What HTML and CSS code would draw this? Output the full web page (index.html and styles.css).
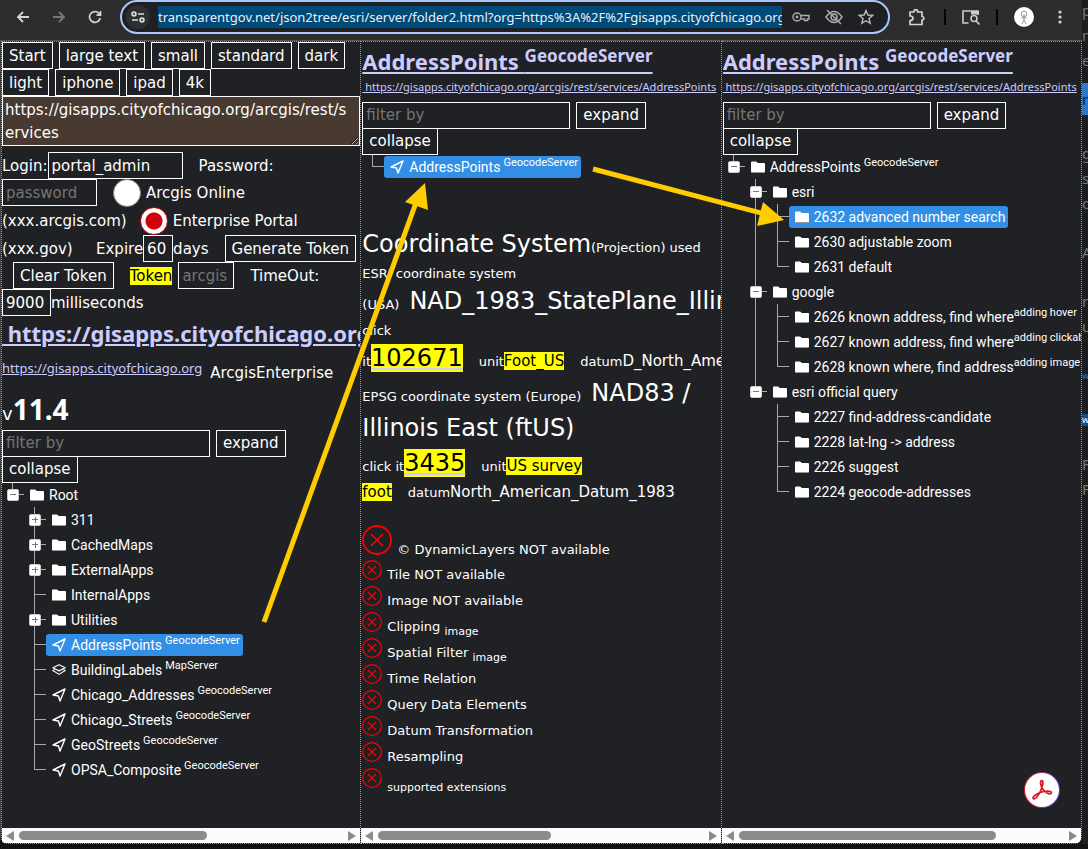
FILE: index.html
```html
<!DOCTYPE html>
<html lang="en">
<head>
<meta charset="utf-8">
<title>AddressPoints GeocodeServer</title>
<link rel="stylesheet" href="styles.css">
</head>
<body>
<svg class="defs" aria-hidden="true">
  <symbol id="folder" viewBox="0 0 14 12"><path d="M0 1.5Q0 .5 1 .5H4.8Q5.4.5 5.8 1L6.8 2H13Q14 2 14 3V10.500Q14 11.500 13 11.500H1Q0 11.500 0 10.500Z" fill="#fff"/><path d="M.5 11.500H13.500" stroke="#999" fill="none"/></symbol>
  <symbol id="nav" viewBox="0 0 14 14"><path d="M13 1 1 7 6.500 8 8 13Z" fill="none" stroke="#fff" stroke-width="1.400" stroke-linejoin="round"/></symbol>
  <symbol id="layers" viewBox="0 0 16 14"><path d="M8 1 15 4.500 8 8 1 4.500ZM3.500 6 1 7.500 8 12 15 7.500 12.500 6" fill="none" stroke="#fff" stroke-width="1.300" stroke-linejoin="round"/></symbol>
  <symbol id="no" viewBox="0 0 30 30"><circle cx="15" cy="15" r="14" fill="none" stroke="#f00" stroke-width="1.800"/><path d="M9 9 21 21M21 9 9 21" stroke="#f00" stroke-width="1.600"/></symbol>
</svg>
<div class="desktop">
<div class="window">
  <header class="toolbar">
    <button class="tb back" aria-label="Back"><svg width="14" height="14" viewBox="0 0 14 14"><path d="M13 7H2M7 2 2 7 7 12" fill="none" stroke="#d5d5d5" stroke-width="1.800"/></svg></button>
    <button class="tb fwd" aria-label="Forward"><svg width="14" height="14" viewBox="0 0 14 14"><path d="M1 7H12M7 2 12 7 7 12" fill="none" stroke="#777" stroke-width="1.800"/></svg></button>
    <button class="tb reload" aria-label="Reload"><svg width="14" height="14" viewBox="0 0 14 14"><path d="M12.200 8A5.400 5.400 0 1 1 11 3.400L12.500 5M12.500 1V5.200H8.500" fill="none" stroke="#d5d5d5" stroke-width="1.700"/></svg></button>
    <div class="address">
      <button class="tb site" aria-label="Site settings"><svg width="14" height="12" viewBox="0 0 14 12"><g fill="none" stroke="#ddd" stroke-width="1.700"><circle cx="3" cy="3" r="1.900"/><circle cx="11" cy="9" r="1.900"/><path d="M7 3H13M1 9H7"/></g></svg></button>
      <input class="url" aria-label="Address" value="transparentgov.net/json2tree/esri/server/folder2.html?org=https%3A%2F%2Fgisapps.cityofchicago.org">
      <button class="tb" aria-label="Passwords"><svg width="18" height="12" viewBox="0 0 18 12"><g fill="none" stroke="#aaa" stroke-width="1.500"><circle cx="5" cy="6" r="4"/><path d="M9 4.500H17V8H15.500V9.500H12.500V8H8.800"/></g><circle cx="5" cy="6" r="1.400" fill="#aaa"/></svg></button>
      <button class="tb" aria-label="Third-party cookies blocked"><svg width="18" height="16" viewBox="0 0 18 16"><g fill="none" stroke="#aaa" stroke-width="1.500"><path d="M1 8Q9-3 17 8Q9 19 1 8Z"/><circle cx="9" cy="8" r="3"/><path d="M2 1 16 15"/></g></svg></button>
      <button class="tb" aria-label="Bookmark"><svg width="16" height="16" viewBox="0 0 16 16"><path d="M8 1.500 9.900 6 14.800 6.400 11 9.500 12.200 14.300 8 11.700 3.800 14.300 5 9.500 1.200 6.400 6.100 6Z" fill="none" stroke="#bbb" stroke-width="1.400"/></svg></button>
    </div>
    <button class="tb ext" aria-label="Extensions"><svg width="18" height="17" viewBox="0 0 18 17"><path d="M2 3H6V2.500A1.800 1.800 0 0 1 9.600 2.500V3H14V7.500H14.500A1.800 1.800 0 0 1 14.500 11H14V15.500H2V11.500Q5 11.500 5 9.300 5 7 2 7Z" fill="none" stroke="#d5d5d5" stroke-width="1.700" stroke-linejoin="round"/></svg></button>
    <span class="sep"></span>
    <button class="tb" aria-label="Search tabs"><svg width="18" height="16" viewBox="0 0 18 16"><g fill="none" stroke="#ccc" stroke-width="1.600"><path d="M6.500 14H1V2H16V6"/><circle cx="12" cy="9.500" r="3"/><path d="M14 12 17.500 15.500"/></g><path d="M9 2H17V5.500H9Z" fill="#ccc"/></svg></button>
    <span class="sep"></span>
    <button class="tb avatar" aria-label="Profile"><svg width="20" height="20" viewBox="0 0 20 20"><circle cx="10" cy="10" r="10" fill="#fff"/><g fill="none" stroke="#888" stroke-width=".9"><circle cx="10" cy="7" r="2.800"/><path d="M10 7V13M7.500 11H12.500M10 13 8 17M10 13 12 17"/></g></svg></button>
    <button class="tb menu" aria-label="Menu"><svg width="4" height="16" viewBox="0 0 4 16" fill="#d5d5d5"><circle cx="2" cy="3" r="1.600"/><circle cx="2" cy="8" r="1.600"/><circle cx="2" cy="13" r="1.600"/></svg></button>
  </header>

  <main class="panels">
    <section class="panel">
      <div class="content">
        <div class="row"><button class="btn">Start</button><button class="btn">large text</button><button class="btn">small</button><button class="btn">standard</button><button class="btn">dark</button></div>
        <div class="row"><button class="btn">light</button><button class="btn">iphone</button><button class="btn">ipad</button><button class="btn">4k</button></div>
        <textarea class="service" aria-label="Service URL" rows="2">https://gisapps.cityofchicago.org/arcgis/rest/services</textarea>
        <form class="login">
          <div class="row flush"><label for="user">Login:</label><input class="field w-user" id="user" value="portal_admin"><label class="lead" for="pass">Password:</label></div>
          <div class="row flush"><input class="field w-pass" id="pass" type="password" placeholder="password"><input class="radio" type="radio" name="portal" id="online"><label for="online">Arcgis Online</label></div>
          <div class="row flush tall"><label for="online">(xxx.arcgis.com)</label><input class="radio near" type="radio" name="portal" id="ent" checked><label for="ent">Enterprise Portal</label></div>
          <div class="row flush"><label class="w-gov" for="ent">(xxx.gov)</label><label for="exp">Expire</label><input class="field w-exp" id="exp" value="60"><span>days</span><button type="button" class="btn lead">Generate Token</button></div>
          <div class="row flush indent"><button type="button" class="btn">Clear Token</button><label class="mark lead" for="tok">Token</label><input class="field w-tok" id="tok" placeholder="arcgis token"><label class="lead" for="time">TimeOut:</label></div>
          <div class="row flush"><input class="field w-time" id="time" value="9000"><span>milliseconds</span></div>
        </form>
        <h1 class="title server"><a href="#">&nbsp;https://gisapps.cityofchicago.org</a></h1>
        <div class="host"><a class="url-link" href="#">https://gisapps.cityofchicago.org</a><span class="kind">ArcgisEnterprise</span></div>
        <div class="version">v<b>11.4</b></div>
        <div class="row filters"><input class="field filter" aria-label="Filter services" placeholder="filter by"><button class="btn">expand</button></div>
        <div class="row filters"><button class="btn">collapse</button></div>
        <ul class="tree">
          <li><div class="node"><button class="toggle minus" aria-label="Collapse Root"></button><span class="label"><svg class="fi"><use href="#folder"/></svg>Root</span></div>
            <ul>
              <li><div class="node"><button class="toggle" aria-label="Expand 311"></button><span class="label"><svg class="fi"><use href="#folder"/></svg>311</span></div></li>
              <li><div class="node"><button class="toggle" aria-label="Expand CachedMaps"></button><span class="label"><svg class="fi"><use href="#folder"/></svg>CachedMaps</span></div></li>
              <li><div class="node"><button class="toggle" aria-label="Expand ExternalApps"></button><span class="label"><svg class="fi"><use href="#folder"/></svg>ExternalApps</span></div></li>
              <li><div class="node"><span class="label"><svg class="fi"><use href="#folder"/></svg>InternalApps</span></div></li>
              <li><div class="node"><button class="toggle" aria-label="Expand Utilities"></button><span class="label"><svg class="fi"><use href="#folder"/></svg>Utilities</span></div></li>
              <li><div class="node"><span class="label on"><svg class="fi"><use href="#nav"/></svg>AddressPoints<i>GeocodeServer</i></span></div></li>
              <li><div class="node"><span class="label"><svg class="fi"><use href="#layers"/></svg>BuildingLabels<i>MapServer</i></span></div></li>
              <li><div class="node"><span class="label"><svg class="fi"><use href="#nav"/></svg>Chicago_Addresses<i>GeocodeServer</i></span></div></li>
              <li><div class="node"><span class="label"><svg class="fi"><use href="#nav"/></svg>Chicago_Streets<i>GeocodeServer</i></span></div></li>
              <li><div class="node"><span class="label"><svg class="fi"><use href="#nav"/></svg>GeoStreets<i>GeocodeServer</i></span></div></li>
              <li><div class="node"><span class="label"><svg class="fi"><use href="#nav"/></svg>OPSA_Composite<i>GeocodeServer</i></span></div></li>
            </ul>
          </li>
        </ul>
      </div>
      <div class="scroll"><span class="arr l"></span><span class="track"><span class="thumb" style="width:58%"></span></span><span class="arr r"></span></div>
    </section>

    <section class="panel">
      <div class="content">
        <h1 class="title"><a href="#">AddressPoints <sup>GeocodeServer</sup></a></h1>
        <div class="path"><a class="url-link" href="#">&nbsp;https://gisapps.cityofchicago.org/arcgis/rest/services/AddressPoints</a></div>
        <div class="row filters"><input class="field filter" aria-label="Filter layers" placeholder="filter by"><button class="btn">expand</button></div>
        <div class="row filters"><button class="btn">collapse</button></div>
        <ul class="tree">
          <li><div class="node"><span class="label on"><svg class="fi"><use href="#nav"/></svg>AddressPoints<i>GeocodeServer</i></span></div></li>
        </ul>
        <div class="coords">
          <div class="big">Coordinate System<small>(Projection) used</small></div>
          <div class="line"><small>ESRI coordinate system</small></div>
          <div class="big"><small>(USA)</small><span class="name">NAD_1983_StatePlane_Illinois_East</span></div>
          <div class="line"><small>click</small></div>
          <div class="big"><small>it</small><a class="code" href="#">102671</a><small class="gap">unit</small><span class="mark val">Foot_US</span><small class="gap">datum</small><span class="val">D_North_American_1983</span></div>
          <div class="big"><small>EPSG coordinate system (Europe)</small><span class="name">NAD83 /</span></div>
          <div class="big">Illinois East (ftUS)</div>
          <div class="big"><small>click it</small><a class="code" href="#">3435</a><small class="gap">unit</small><span class="mark val">US survey</span></div>
          <div class="line"><span class="mark val">foot</span><small class="gap">datum</small><span class="val">North_American_Datum_1983</span></div>
        </div>
        <ul class="caps">
          <li class="first"><svg><use href="#no"/></svg><span>© DynamicLayers NOT available</span></li>
          <li><svg><use href="#no"/></svg><span>Tile NOT available</span></li>
          <li><svg><use href="#no"/></svg><span>Image NOT available</span></li>
          <li><svg><use href="#no"/></svg><span>Clipping <sub>image</sub></span></li>
          <li><svg><use href="#no"/></svg><span>Spatial Filter <sub>image</sub></span></li>
          <li><svg><use href="#no"/></svg><span>Time Relation</span></li>
          <li><svg><use href="#no"/></svg><span>Query Data Elements</span></li>
          <li><svg><use href="#no"/></svg><span>Datum Transformation</span></li>
          <li><svg><use href="#no"/></svg><span>Resampling</span></li>
          <li><svg><use href="#no"/></svg><span><sub>supported extensions</sub></span></li>
        </ul>
      </div>
      <div class="scroll"><span class="arr l"></span><span class="track"><span class="thumb" style="width:53%"></span></span><span class="arr r"></span></div>
    </section>

    <section class="panel">
      <div class="content">
        <h1 class="title"><a href="#">AddressPoints <sup>GeocodeServer</sup></a></h1>
        <div class="path"><a class="url-link" href="#">&nbsp;https://gisapps.cityofchicago.org/arcgis/rest/services/AddressPoints</a></div>
        <div class="row filters"><input class="field filter" aria-label="Filter samples" placeholder="filter by"><button class="btn">expand</button></div>
        <div class="row filters"><button class="btn">collapse</button></div>
        <ul class="tree">
          <li><div class="node"><button class="toggle minus" aria-label="Collapse AddressPoints"></button><span class="label"><svg class="fi"><use href="#folder"/></svg>AddressPoints<i>GeocodeServer</i></span></div>
            <ul>
              <li><div class="node"><button class="toggle minus" aria-label="Collapse esri"></button><span class="label"><svg class="fi"><use href="#folder"/></svg>esri</span></div>
                <ul>
                  <li><div class="node"><span class="label on"><svg class="fi"><use href="#folder"/></svg>2632 advanced number search</span></div></li>
                  <li><div class="node"><span class="label"><svg class="fi"><use href="#folder"/></svg>2630 adjustable zoom</span></div></li>
                  <li><div class="node"><span class="label"><svg class="fi"><use href="#folder"/></svg>2631 default</span></div></li>
                </ul></li>
              <li><div class="node"><button class="toggle minus" aria-label="Collapse google"></button><span class="label"><svg class="fi"><use href="#folder"/></svg>google</span></div>
                <ul>
                  <li><div class="node"><span class="label"><svg class="fi"><use href="#folder"/></svg>2626 known address, find where<i class="tight">adding hover</i></span></div></li>
                  <li><div class="node"><span class="label"><svg class="fi"><use href="#folder"/></svg>2627 known address, find where<i class="tight">adding clickable</i></span></div></li>
                  <li><div class="node"><span class="label"><svg class="fi"><use href="#folder"/></svg>2628 known where, find address<i class="tight">adding image</i></span></div></li>
                </ul></li>
              <li><div class="node"><button class="toggle minus" aria-label="Collapse esri official query"></button><span class="label"><svg class="fi"><use href="#folder"/></svg>esri official query</span></div>
                <ul>
                  <li><div class="node"><span class="label"><svg class="fi"><use href="#folder"/></svg>2227 find-address-candidate</span></div></li>
                  <li><div class="node"><span class="label"><svg class="fi"><use href="#folder"/></svg>2228 lat-lng -&gt; address</span></div></li>
                  <li><div class="node"><span class="label"><svg class="fi"><use href="#folder"/></svg>2226 suggest</span></div></li>
                  <li><div class="node"><span class="label"><svg class="fi"><use href="#folder"/></svg>2224 geocode-addresses</span></div></li>
                </ul></li>
            </ul>
          </li>
        </ul>
      </div>
      <div class="scroll"><span class="arr l"></span><span class="track"><span class="thumb" style="width:79%"></span></span><span class="arr r"></span></div>
      <button class="pdf" aria-label="Open in Acrobat"><svg width="22" height="22" viewBox="0 0 22 22"><path d="M11 1.500C8.500 1.500 9.500 7 12 10.500 14 13.500 18 15.500 20 14.500 22 12.500 17 11.500 13 12.500 8 13.500 2 16.500 2 19 3.500 22 8 16 10 11 11.500 7 13 1.500 11 1.500Z" fill="none" stroke="#d7191f" stroke-width="1.700"/></svg></button>
    </section>
  </main>
  <svg class="arrows" aria-hidden="true"><g fill="#fc0"><path d="M264 622 417 200" stroke="#fc0" stroke-width="5"/><path d="M425 183 405 202 428 210Z"/><path d="M593 169 765 214" stroke="#fc0" stroke-width="5"/><path d="M784 220 763 202 757 226Z"/></g></svg>
</div>
<aside class="behind"><span>p</span><span>n</span><span>e</span><span class="blue">n</span><span class="low">g</span><span>s</span><span>c</span><span class="low">A</span><span class="low">n</span><span>u</span><span class="word">w</span><span class="word lit">w</span><span class="low">F</span><span>F</span></aside>
</div>
</body>
</html>
```

FILE: styles.css
```css
* { box-sizing: border-box; }
body { margin: 0; background: #111214; color: #fff; font: 15px/22px "DejaVu Sans", Verdana, sans-serif; }
button, input, textarea { font: inherit; color: inherit; margin: 0; }
button { border: 0; background: none; padding: 0; }
ul { list-style: none; margin: 0; padding: 0; }
.defs { display: block; width: 0; height: 0; }
.desktop { display: flex; height: 100vh; overflow: hidden; padding-bottom: 5px; }
.window { flex: 1; min-width: 0; display: flex; flex-direction: column; position: relative; background: #202124; border-radius: 0 0 8px 8px; overflow: hidden; }

.toolbar { display: flex; align-items: center; height: 41px; padding: 0 20px 6px 16px; background: #2d2d2e; border-bottom: 1px solid #555; }
.tb { display: grid; place-items: center; flex: none; }
.fwd { margin-left: 22px; }
.reload { margin-left: 22px; }
.address { flex: 1; min-width: 0; display: flex; align-items: center; gap: 15px; height: 34px; margin: 0 18px; padding: 0 14px 0 4px; border: 2px solid #a8c7fa; border-radius: 17px; background: #1f2023; }
.site { width: 24px; height: 24px; border-radius: 50%; background: #2e2f31; margin-right: -7px; }
.url { flex: 1; min-width: 0; height: 22px; border: 0; padding: 0; margin-right: -5px; background: #004a77; font: 13px "Noto Sans", sans-serif; color: #e8f1fa; }
.ext { margin-right: 2px; }
.sep { width: 2px; height: 16px; margin: 0 16px; background: #050505; }
.menu { margin-left: 24px; }

.panels { flex: 1; min-height: 0; display: grid; grid-template-columns: repeat(3, minmax(0, 1fr)); border-left: 1px solid #444; }
.panel { position: relative; display: flex; flex-direction: column; min-height: 0; border: 1px dotted #999; border-left-width: 0; }
.panel:first-child { border-left-width: 1px; }
.content { flex: 1; min-height: 0; overflow: hidden; white-space: nowrap; }
.panel + .panel .content { padding-left: 1px; }
.row { display: flex; align-items: center; gap: 6px; height: 27px; }
.filters { height: 26px; }
.flush { gap: 0; }
.btn { height: 27px; padding: 0 6px; border: 1px solid #fff; flex: none; }
.service { display: block; width: 100%; height: 50px; padding: 2px 8px 2px 2px; border: 1px solid #fff; background: #483a31; line-height: 23px; word-break: break-all; overflow: hidden; }
.login { margin-top: 6px; }
.field { height: 27px; padding: 0 3px; border: 1px solid #fff; border-radius: 0; background: transparent; }
.field::placeholder { color: #757575; opacity: 1; }
.tall { height: 29px; }
.indent { padding-left: 11px; }
.lead { margin-left: 16px; }
.w-user { width: 135px; }
.w-pass { width: 95px; }
.w-exp { width: 30px; }
.w-tok { width: 56px; margin-left: 6px; }
.w-time { width: 49px; }
.w-gov { width: 94px; }
.mark { background: #ff0; color: #000; line-height: 18px; }
.radio { appearance: none; flex: none; width: 28px; height: 28px; margin: 0 5px 0 16px; border: 1px solid #888; border-radius: 50%; background: #fff; }
.near { margin-left: 13px; }
.radio:checked { border-color: #d0000d; background: radial-gradient(circle, #d0000d 8px, #fff 9px); }

.title { margin: 0; height: 33px; padding-top: 2px; overflow: hidden; font: bold 22px/34px "Noto Sans", sans-serif; }
.title a, .url-link { color: #ccf; text-decoration: underline; }
.title sup { font-size: 17px; line-height: 1px; vertical-align: 8px; }
.server { height: 36px; padding-top: 0; }
.path { height: 27px; line-height: 22px; }
.path .url-link { font-size: 11px; }
.url-link { font: 13px/22px "Noto Sans", sans-serif; }
.host { display: flex; align-items: flex-start; gap: 8px; height: 37px; padding-top: 5px; }
.kind { padding-top: 5px; }
.version { height: 41px; line-height: 40px; font-size: 18px; }
.version b { font: bold 28px/40px "Noto Sans", sans-serif; }
.filter { width: 208px; }

.tree { font: 14px/22px Roboto, sans-serif; }
.tree ul { margin-left: 22px; }
.tree li { background: linear-gradient(#aaa, #aaa) 10px 0 / 1px 100% no-repeat; }
.tree li:last-child { background-size: 1px 12px; }
.node { display: grid; grid-template-columns: 22px max-content; align-items: center; height: 25px; background: linear-gradient(#aaa, #aaa) 10px 12px / 12px 1px no-repeat; }
.toggle { width: 12px; height: 12px; margin-left: 5px; border: 1px solid #ccc; border-radius: 2px; background: linear-gradient(#777, #777) center / 6px 1px no-repeat, linear-gradient(#777, #777) center / 1px 6px no-repeat, #fff; }
.minus { background: linear-gradient(#777, #777) center / 6px 1px no-repeat, #fff; }
.label { grid-column: 2; display: flex; align-items: center; height: 22px; padding: 0 3px 0 6px; border-radius: 3px; }
.on { background: #338fe5; }
.fi { width: 14px; height: 14px; margin-right: 5px; flex: none; }
.label i { font-style: normal; font-size: 11px; margin: -8px 0 0 3px; }
.label .tight { margin-left: 0; }

.coords { margin-top: 48px; }
.big { height: 35px; font-size: 24px; line-height: 35px; }
.line { height: 22px; line-height: 22px; }
.coords small { font-size: 13px; line-height: 20px; }
.name { margin-left: 10px; }
.code { background: #ff0; color: #000; text-decoration-color: #ccf; }
.gap { margin-left: 16px; }
.val { font-size: 15px; line-height: 20px; }
.caps { margin-top: 22px; font-size: 13px; }
.caps li { display: flex; align-items: flex-start; gap: 5px; height: 26px; }
.caps svg { width: 20px; height: 20px; flex: none; }
.caps span { padding-top: 4px; }
.caps sub { font-size: 11px; line-height: 1px; }
.caps .first { height: 35px; }
.caps .first svg { width: 30px; height: 30px; }
.caps .first span { padding-top: 14px; }

.scroll { display: flex; align-items: center; gap: 5px; height: 15px; padding: 0 4px; background: #fcfcfc; }
.track { flex: 1; display: flex; }
.thumb { height: 9px; border-radius: 5px; background: #8b8b8b; }
.arr { border: 5px solid transparent; }
.l { border-left-width: 0; border-right: 8px solid #8b8b8b; }
.r { border-right-width: 0; border-left: 8px solid #8b8b8b; }
.pdf { position: absolute; right: 21px; bottom: 35px; width: 36px; height: 36px; display: grid; place-items: center; border: 1px solid transparent; border-radius: 50%; background: linear-gradient(#fff, #fff) padding-box, linear-gradient(90deg, #e02020, #5b3fd8) border-box; }
.arrows { position: absolute; inset: 0; width: 100%; height: 100%; pointer-events: none; }
.behind { width: 6px; flex: none; overflow: hidden; display: flex; flex-direction: column; gap: 4px; background: #1c1d1f; color: #777; font: 15px/21px "Noto Sans", sans-serif; }
.behind .blue { margin-top: 8px; line-height: 32px; background: #3278c8; color: #123; }
.behind .low { margin-top: 24px; }
.behind .word { margin-top: 24px; font-size: 9px; color: #3278c8; }
.behind .lit { line-height: 12px; background: #174a90; color: #fff; }
```
